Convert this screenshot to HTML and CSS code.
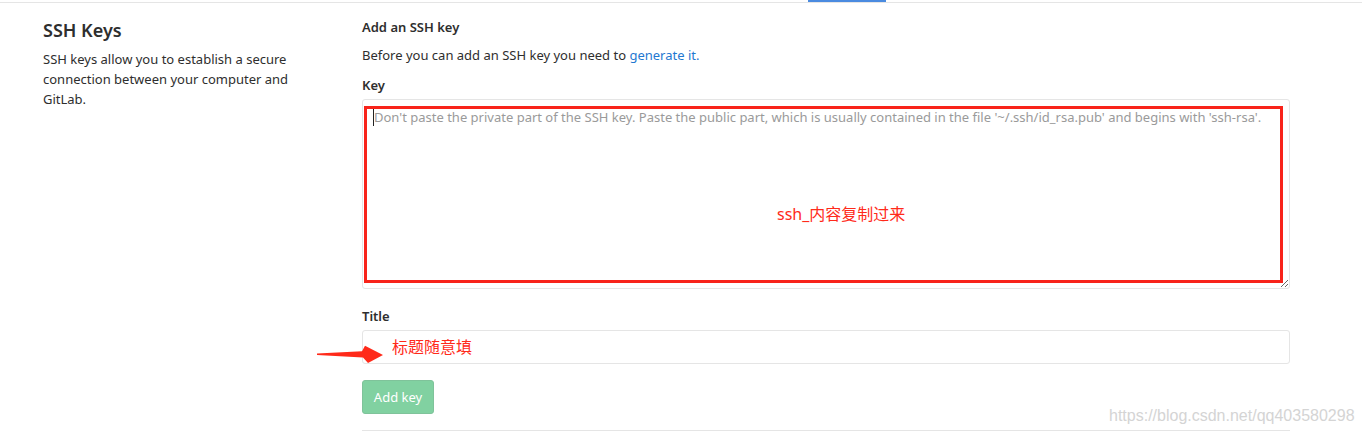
FILE: index.html
```html
<!DOCTYPE html>
<html lang="en">
<head>
<meta charset="utf-8">
<title>SSH Keys</title>
<link rel="stylesheet" href="styles.css">
</head>
<body>
<div class="topbar"><div class="tab-indicator"></div></div>
<div class="content">
  <aside class="sidebar">
    <h4 class="side-title">SSH Keys</h4>
    <p class="side-desc">SSH keys allow you to establish a secure connection between your computer and GitLab.</p>
  </aside>
  <section class="main">
    <h5 class="form-heading">Add an SSH key</h5>
    <p class="form-help">Before you can add an SSH key you need to <a href="#">generate it.</a></p>
    <label class="label" for="key">Key</label>
    <div class="key-wrap">
      <textarea id="key" class="key-input" placeholder="Don't paste the private part of the SSH key. Paste the public part, which is usually contained in the file '~/.ssh/id_rsa.pub' and begins with 'ssh-rsa'."></textarea>
      <span class="caret"></span>
      <div class="annot-box"><span class="annot-text">ssh_内容复制过来</span></div>
    </div>
    <label class="label title-label" for="title">Title</label>
    <div class="title-wrap">
      <input id="title" class="title-input" type="text">
      <svg class="arrow" width="70" height="20" viewBox="0 0 70 20"><polygon points="0,8.6 45,6.2 48,0.8 66,10 51,18 46,12.6 0,10" fill="#ff2a1a"/></svg>
      <span class="annot-title">标题随意填</span>
    </div>
    <button class="btn-add" type="button" disabled>Add key</button>
    <hr class="divider">
  </section>
</div>
<div class="watermark">https://blog.csdn.net/qq403580298</div>
</body>
</html>
```

FILE: styles.css
```css
html, body {
  margin: 0;
  padding: 0;
  background: #fff;
}
body {
  font-family: "Noto Sans", "Open Sans", "Noto Sans CJK SC", sans-serif;
  font-size: 13px;
  color: #2e2e2e;
  position: relative;
  height: 435px;
  overflow: hidden;
}
.topbar {
  height: 2px;
  border-bottom: 1px solid #e5e5e5;
}
.tab-indicator {
  margin-left: 808px;
  width: 78px;
  height: 2px;
  background: #4a8be0;
}
.content {
  display: flex;
  padding-left: 43px;
}
.sidebar {
  width: 319px;
  flex: none;
}
.side-title {
  margin: 15px 0 0;
  font-size: 18px;
  line-height: 24px;
  font-weight: 600;
  color: #2e2e2e;
}
.side-desc {
  margin: 7px 0 0;
  width: 255px;
  line-height: 20px;
  font-size: 13px;
}
.main {
  width: 928px;
  flex: none;
}
.form-heading {
  margin: 14px 0 0;
  font-size: 13px;
  line-height: 20px;
  font-weight: 600;
}
.form-help {
  margin: 8px 0 0;
  line-height: 20px;
}
.form-help a {
  color: #1f78d1;
  text-decoration: none;
}
.label {
  display: block;
  margin-top: 10px;
  line-height: 20px;
  font-weight: 600;
}
.key-wrap {
  position: relative;
  margin-top: 4px;
  height: 190px;
}
.key-input {
  display: block;
  box-sizing: border-box;
  width: 100%;
  height: 190px;
  margin: 0;
  padding: 7px 11px;
  border: 1px solid #e5e5e5;
  border-radius: 3px;
  font-family: inherit;
  font-size: 13px;
  line-height: 20px;
  color: #2e2e2e;
  resize: vertical;
  outline: none;
}
.key-input::placeholder {
  color: #9a9a9a;
}
.caret {
  position: absolute;
  left: 11px;
  top: 10px;
  width: 1px;
  height: 17px;
  background: #222;
}
.annot-box {
  position: absolute;
  left: 2px;
  top: 7px;
  width: 919px;
  height: 177px;
  box-sizing: border-box;
  border: 3px solid #f8231a;
}
.annot-text {
  position: absolute;
  left: 410px;
  top: 95px;
  font-size: 16px;
  line-height: 20px;
  color: #ff2a1a;
}
.title-label {
  margin-top: 17px;
}
.title-wrap {
  position: relative;
  margin-top: 4px;
  height: 34px;
}
.title-input {
  display: block;
  box-sizing: border-box;
  width: 100%;
  height: 34px;
  margin: 0;
  border: 1px solid #e5e5e5;
  border-radius: 3px;
  outline: none;
}
.arrow {
  position: absolute;
  left: -45px;
  top: 15px;
}
.annot-title {
  position: absolute;
  left: 30px;
  top: 7px;
  font-size: 16px;
  line-height: 20px;
  color: #ff2a1a;
}
.btn-add {
  display: block;
  margin-top: 16px;
  width: 72px;
  height: 34px;
  padding: 0;
  border: 1px solid #7fc39a;
  border-radius: 3px;
  background: #81d1a1;
  color: #fff;
  font-family: inherit;
  font-size: 13px;
}
.divider {
  margin: 16px 0 0;
  border: 0;
  border-top: 1px solid #e5e5e5;
}
.watermark {
  position: absolute;
  left: 1109px;
  top: 406px;
  font-family: "Liberation Sans", Arial, sans-serif;
  font-size: 16px;
  line-height: 20px;
  color: #d4d4d4;
}
```
